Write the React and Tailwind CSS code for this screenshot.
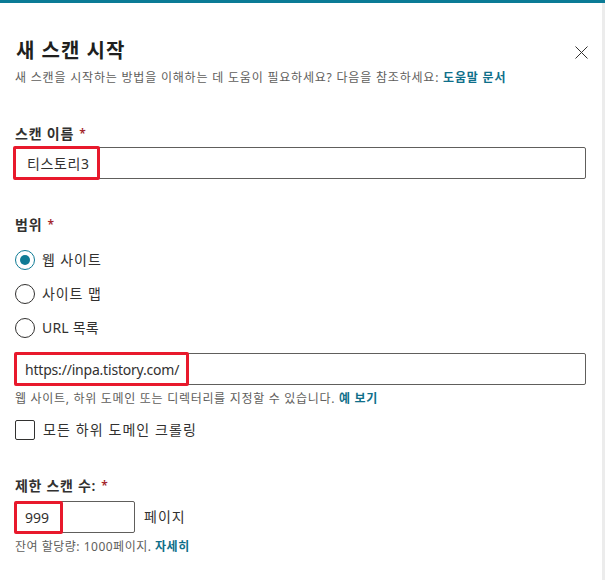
import React from "react";

const font = { fontFamily: '"Noto Sans", "Noto Sans CJK KR", sans-serif' };

function Req() {
  return <span className="ml-[5px] text-[#a4262c] text-[12px] align-top">*</span>;
}

function Mark({ className }) {
  return (
    <div
      className={"pointer-events-none absolute border-[3px] border-[#e8192c] rounded-[2px] " + className}
    />
  );
}

function Radio({ checked, label, tight }) {
  return (
    <div className="flex items-center h-5">
      {checked ? (
        <div className="w-5 h-5 rounded-full border border-[#0f7b95] flex items-center justify-center">
          <div className="w-[10px] h-[10px] rounded-full bg-[#0f7b95]" />
        </div>
      ) : (
        <div className="w-5 h-5 rounded-full border border-[#323130]" />
      )}
      <span
        className={
          "ml-[7px] text-[14px] leading-5 text-[#323130] " +
          (tight ? "tracking-[0.2px]" : "tracking-[0.9px]")
        }
      >
        {label}
      </span>
    </div>
  );
}

export default function App() {
  return (
    <div className="w-[605px] h-[580px] bg-white flex flex-col text-[#323130]" style={font}>
      <div className="h-[3px] w-full bg-[#0b7b96] shrink-0" />
      <div className="flex flex-1">
        <div className="flex-1 flex flex-col pl-[15px] pr-[16px]">
          <div className="flex items-start justify-between mt-[34px]">
            <h1 className="text-[20px] leading-7 font-bold tracking-[1px] text-[#201f1e] pl-[1px]">새 스캔 시작</h1>
            <button className="mt-[8px] mr-[-2px] w-[14px] h-[14px] flex items-center justify-center">
              <svg width="13" height="13" viewBox="0 0 13 13">
                <path d="M0.5 0.5 L12.5 12.5 M12.5 0.5 L0.5 12.5" stroke="#323130" strokeWidth="1" fill="none" />
              </svg>
            </button>
          </div>
          <p className="mt-[5px] text-[12px] leading-4 tracking-[0.8px] text-[#605e5c]">
            새 스캔을 시작하는 방법을 이해하는 데 도움이 필요하세요? 다음을 참조하세요:{" "}
            <span className="text-[#0f6f8a] font-semibold">도움말 문서</span>
          </p>

          <label className="mt-[38px] text-[14px] leading-5 font-semibold tracking-[0.8px]">
            스캔 이름<Req />
          </label>
          <div className="relative mt-[3px]">
            <div className="h-8 border border-[#605e5c] rounded-[2px] flex items-center pl-[11px] text-[14px] tracking-[0.6px]">
              티스토리3
            </div>
            <Mark className="left-[-2px] top-[-1px] w-[87px] h-[34px]" />
          </div>

          <label className="mt-[36px] text-[14px] leading-5 font-semibold tracking-[0.8px]">
            범위<Req />
          </label>
          <div className="mt-[15px] flex flex-col gap-[14px]">
            <Radio checked label="웹 사이트" />
            <Radio label="사이트 맵" />
            <Radio label="URL 목록" tight />
          </div>

          <div className="relative mt-[15px]">
            <div className="h-8 border border-[#605e5c] rounded-[2px] flex items-center pl-[9px] text-[14px] tracking-[-0.2px]">
              https://inpa.tistory.com/
            </div>
            <Mark className="left-[-1px] top-[-1px] w-[175px] h-[34px]" />
          </div>
          <p className="mt-[6px] text-[12px] leading-4 tracking-[0.7px] text-[#605e5c]">
            웹 사이트, 하위 도메인 또는 디렉터리를 지정할 수 있습니다.{" "}
            <span className="text-[#0f6f8a] font-semibold">예 보기</span>
          </p>
          <div className="mt-[13px] flex items-center h-5">
            <div className="w-5 h-5 border border-[#323130] rounded-[2px]" />
            <span className="ml-[8px] text-[14px] leading-5 tracking-[1.1px]">모든 하위 도메인 크롤링</span>
          </div>

          <label className="mt-[36px] text-[14px] leading-5 font-semibold tracking-[0.7px]">
            제한 스캔 수:<Req />
          </label>
          <div className="mt-[5px] flex items-center">
            <div className="relative">
              <div className="w-[120px] h-8 border border-[#605e5c] rounded-[2px] flex items-center pl-[9px] text-[14px]">
                999
              </div>
              <Mark className="left-[-1px] top-0 w-[49px] h-[33px]" />
            </div>
            <span className="ml-[9px] text-[14px] leading-5 tracking-[1px]">페이지</span>
          </div>
          <p className="mt-[6px] text-[12px] leading-4 tracking-[0.5px] text-[#605e5c]">
            잔여 할당량: 1000페이지.{" "}
            <span className="text-[#0f6f8a] font-semibold">자세히</span>
          </p>
        </div>
        <div className="w-[3px] bg-[#ececec] shrink-0" />
      </div>
    </div>
  );
}
